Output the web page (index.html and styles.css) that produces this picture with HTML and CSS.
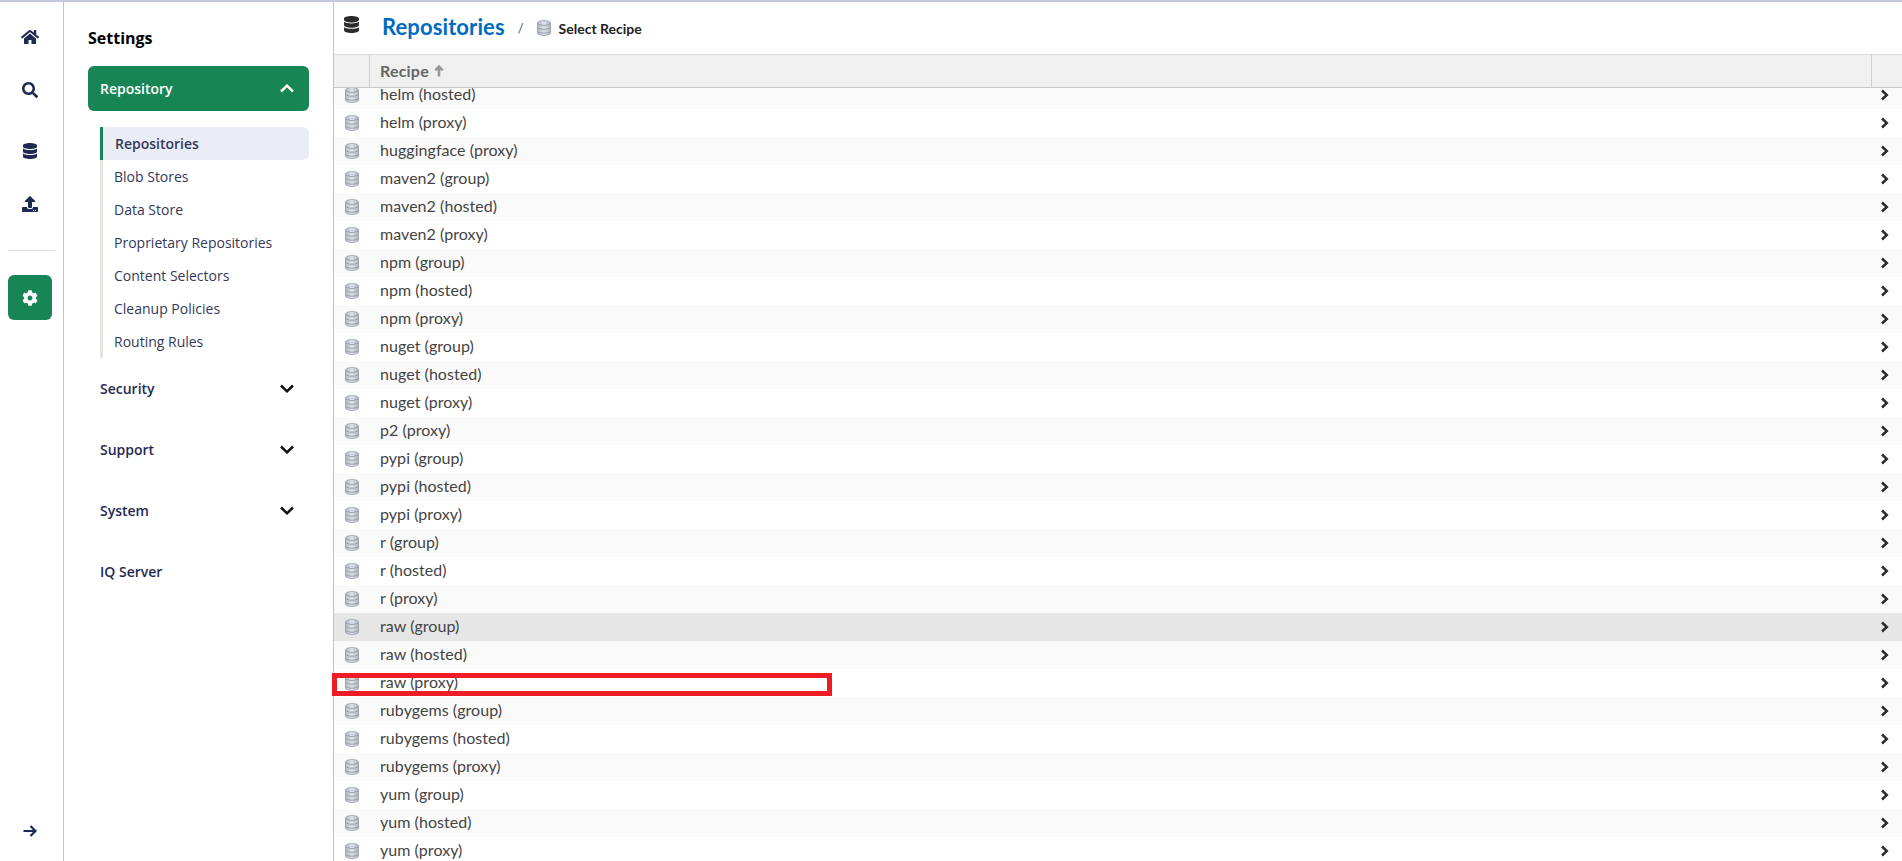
FILE: index.html
```html
<!DOCTYPE html>
<html lang="en">
<head>
<meta charset="utf-8">
<title>Repositories</title>
<link rel="stylesheet" href="styles.css">
</head>
<body>
<svg class="defs" aria-hidden="true">
  <symbol id="i-db" viewBox="0 0 448 512"><path d="M448 73.143v45.714C448 159.143 347.667 192 224 192S0 159.143 0 118.857V73.143C0 32.857 100.333 0 224 0s224 32.857 224 73.143zM448 176v102.857C448 319.143 347.667 352 224 352S0 319.143 0 278.857V176c48.125 33.143 136.208 48.572 224 48.572S399.874 209.143 448 176zm0 160v102.857C448 479.143 347.667 512 224 512S0 479.143 0 438.857V336c48.125 33.143 136.208 48.572 224 48.572S399.874 369.143 448 336z"/></symbol>
  <linearGradient id="g-db" x1="0" y1="0" x2="1" y2="0"><stop offset="0" stop-color="#b4bbc4"/><stop offset="0.5" stop-color="#dfe3e7"/><stop offset="1" stop-color="#aeb6bf"/></linearGradient>
  <symbol id="i-repo" viewBox="0 0 14 16">
    <path d="M.5 3C.5 1.600 3.400.6 7 .6s6.500 1 6.500 2.400v10c0 1.400-2.900 2.400-6.500 2.400S.5 14.400.5 13z" fill="url(#g-db)" stroke="#9aa3ad" stroke-width=".9"/>
    <path d="M.7 3.400C1.600 4.600 4 5.400 7 5.400s5.400-.8 6.300-2M.7 7.300C1.600 8.500 4 9.300 7 9.300s5.400-.8 6.300-2M.7 11.200c.9 1.200 3.300 2 6.300 2s5.400-.8 6.300-2" fill="none" stroke="#8f98a3" stroke-width=".9"/>
  </symbol>
  <symbol id="i-next" viewBox="0 0 10 12"><path d="M2 1.500 6.800 6 2 10.500" fill="none" stroke="currentColor" stroke-width="2.500"/></symbol>
  <symbol id="i-chev" viewBox="0 0 14 9"><path d="M1 7.500 7 1.700l6 5.800" fill="none" stroke="currentColor" stroke-width="2.500"/></symbol>
</svg>

<div class="app">
  <nav class="rail">
    <a class="rail-item"><svg class="ic-home" viewBox="0 0 576 512"><path d="M280.37 148.26L96 300.11V464a16 16 0 0 0 16 16l112.06-.29a16 16 0 0 0 15.92-16V368a16 16 0 0 1 16-16h64a16 16 0 0 1 16 16v95.64a16 16 0 0 0 16 16.05L464 480a16 16 0 0 0 16-16V300L295.67 148.26a12.19 12.19 0 0 0-15.3 0zM571.6 251.47L488 182.56V44.05a12 12 0 0 0-12-12h-56a12 12 0 0 0-12 12v72.61L318.47 43a48 48 0 0 0-61 0L4.34 251.47a12 12 0 0 0-1.6 16.9l25.5 31A12 12 0 0 0 45.15 301l235.22-193.74a12.19 12.19 0 0 1 15.3 0L530.9 301a12 12 0 0 0 16.9-1.6l25.5-31a12 12 0 0 0-1.7-16.93z"/></svg></a>
    <a class="rail-item"><svg class="ic" viewBox="0 0 512 512"><path d="M505 442.7L405.3 343c-4.500-4.500-10.600-7-17-7H372c27.600-35.300 44-79.700 44-128C416 93.100 322.900 0 208 0S0 93.100 0 208s93.100 208 208 208c48.300 0 92.700-16.400 128-44v16.300c0 6.400 2.500 12.500 7 17l99.700 99.700c9.400 9.400 24.600 9.400 33.900 0l28.300-28.300c9.400-9.400 9.400-24.600.1-34zM208 336c-70.700 0-128-57.200-128-128 0-70.700 57.200-128 128-128 70.700 0 128 57.200 128 128 0 70.700-57.200 128-128 128z"/></svg></a>
    <a class="rail-item rail-gap"><svg class="ic"><use href="#i-db"/></svg></a>
    <a class="rail-item"><svg class="ic" viewBox="0 0 512 512"><path d="M296 384h-80c-13.300 0-24-10.700-24-24V192h-87.700c-17.800 0-26.700-21.500-14.100-34.100L242.300 5.700c7.500-7.500 19.800-7.500 27.300 0l152.200 152.200c12.600 12.600 3.700 34.100-14.100 34.100H320v168c0 13.300-10.700 24-24 24zm216-8v112c0 13.300-10.700 24-24 24H24c-13.300 0-24-10.700-24-24V376c0-13.300 10.700-24 24-24h136v8c0 30.900 25.100 56 56 56h80c30.900 0 56-25.100 56-56v-8h136c13.300 0 24 10.700 24 24zm-124 88c0-11-9-20-20-20s-20 9-20 20 9 20 20 20 20-9 20-20zm64 0c0-11-9-20-20-20s-20 9-20 20 9 20 20 20 20-9 20-20z"/></svg></a>
    <div class="rail-divider"></div>
    <a class="rail-item rail-active"><svg class="ic" viewBox="0 0 512 512"><path d="M487.400 315.700l-42.600-24.600c4.300-23.200 4.300-47 0-70.200l42.600-24.600c4.900-2.800 7.100-8.600 5.500-14-11.100-35.600-30-67.800-54.700-94.600-3.800-4.100-10-5.100-14.800-2.300L380.800 110c-17.900-15.400-38.500-27.300-60.800-35.100V25.800c0-5.600-3.900-10.500-9.400-11.700-36.700-8.200-74.300-7.800-109.200 0-5.500 1.200-9.400 6.100-9.400 11.700V75c-22.200 7.900-42.800 19.800-60.800 35.100L88.700 85.500c-4.900-2.800-11-1.900-14.800 2.300-24.700 26.700-43.600 58.900-54.700 94.600-1.700 5.400.6 11.200 5.500 14L67.300 221c-4.300 23.200-4.300 47 0 70.200l-42.600 24.600c-4.900 2.800-7.100 8.600-5.500 14 11.100 35.600 30 67.800 54.700 94.600 3.800 4.100 10 5.100 14.800 2.300l42.600-24.600c17.900 15.400 38.500 27.300 60.800 35.100v49.200c0 5.600 3.900 10.500 9.400 11.700 36.700 8.200 74.300 7.800 109.200 0 5.500-1.200 9.400-6.100 9.400-11.700v-49.200c22.200-7.900 42.800-19.800 60.800-35.100l42.600 24.600c4.900 2.800 11 1.900 14.800-2.300 24.700-26.700 43.600-58.900 54.700-94.600 1.500-5.500-.7-11.300-5.600-14.100zM256 336c-44.100 0-80-35.900-80-80s35.900-80 80-80 80 35.900 80 80-35.900 80-80 80z"/></svg></a>
    <a class="rail-item rail-bottom"><svg class="ic-arrow" viewBox="0 0 14 14"><path d="M.5 7H12M7.500 2l5 5-5 5" fill="none" stroke="currentColor" stroke-width="2.200"/></svg></a>
  </nav>

  <aside class="side">
    <h2 class="side-title">Settings</h2>
    <div class="group group-open">Repository<svg class="chev"><use href="#i-chev"/></svg></div>
    <ul class="sub">
      <li class="sub-active">Repositories</li>
      <li>Blob Stores</li>
      <li>Data Store</li>
      <li>Proprietary Repositories</li>
      <li>Content Selectors</li>
      <li>Cleanup Policies</li>
      <li>Routing Rules</li>
    </ul>
    <div class="group">Security<svg class="chev chev-down"><use href="#i-chev"/></svg></div>
    <div class="group">Support<svg class="chev chev-down"><use href="#i-chev"/></svg></div>
    <div class="group">System<svg class="chev chev-down"><use href="#i-chev"/></svg></div>
    <div class="group">IQ Server</div>
  </aside>

  <main class="main">
    <header class="crumbs">
      <svg class="crumb-db"><use href="#i-db"/></svg>
      <h1 class="crumb-title">Repositories</h1>
      <span class="crumb-sep">/</span>
      <svg class="repo crumb-repo"><use href="#i-repo"/></svg>
      <span class="crumb-sub">Select Recipe</span>
    </header>
    <div class="thead">
      <div class="th th-icon"></div>
      <div class="th th-name">Recipe <svg class="sort" viewBox="0 0 10 12"><path d="M5 11.500V2M1.300 5.400 5 1.600l3.700 3.800" fill="none" stroke="currentColor" stroke-width="2.600"/></svg></div>
      <div class="th th-end"></div>
    </div>
    <div class="tbody">
      <div class="rows">
        <div class="row"><svg class="repo"><use href="#i-repo"/></svg><span class="name">helm (hosted)</span><svg class="next"><use href="#i-next"/></svg></div>
        <div class="row"><svg class="repo"><use href="#i-repo"/></svg><span class="name">helm (proxy)</span><svg class="next"><use href="#i-next"/></svg></div>
        <div class="row"><svg class="repo"><use href="#i-repo"/></svg><span class="name">huggingface (proxy)</span><svg class="next"><use href="#i-next"/></svg></div>
        <div class="row"><svg class="repo"><use href="#i-repo"/></svg><span class="name">maven2 (group)</span><svg class="next"><use href="#i-next"/></svg></div>
        <div class="row"><svg class="repo"><use href="#i-repo"/></svg><span class="name">maven2 (hosted)</span><svg class="next"><use href="#i-next"/></svg></div>
        <div class="row"><svg class="repo"><use href="#i-repo"/></svg><span class="name">maven2 (proxy)</span><svg class="next"><use href="#i-next"/></svg></div>
        <div class="row"><svg class="repo"><use href="#i-repo"/></svg><span class="name">npm (group)</span><svg class="next"><use href="#i-next"/></svg></div>
        <div class="row"><svg class="repo"><use href="#i-repo"/></svg><span class="name">npm (hosted)</span><svg class="next"><use href="#i-next"/></svg></div>
        <div class="row"><svg class="repo"><use href="#i-repo"/></svg><span class="name">npm (proxy)</span><svg class="next"><use href="#i-next"/></svg></div>
        <div class="row"><svg class="repo"><use href="#i-repo"/></svg><span class="name">nuget (group)</span><svg class="next"><use href="#i-next"/></svg></div>
        <div class="row"><svg class="repo"><use href="#i-repo"/></svg><span class="name">nuget (hosted)</span><svg class="next"><use href="#i-next"/></svg></div>
        <div class="row"><svg class="repo"><use href="#i-repo"/></svg><span class="name">nuget (proxy)</span><svg class="next"><use href="#i-next"/></svg></div>
        <div class="row"><svg class="repo"><use href="#i-repo"/></svg><span class="name">p2 (proxy)</span><svg class="next"><use href="#i-next"/></svg></div>
        <div class="row"><svg class="repo"><use href="#i-repo"/></svg><span class="name">pypi (group)</span><svg class="next"><use href="#i-next"/></svg></div>
        <div class="row"><svg class="repo"><use href="#i-repo"/></svg><span class="name">pypi (hosted)</span><svg class="next"><use href="#i-next"/></svg></div>
        <div class="row"><svg class="repo"><use href="#i-repo"/></svg><span class="name">pypi (proxy)</span><svg class="next"><use href="#i-next"/></svg></div>
        <div class="row"><svg class="repo"><use href="#i-repo"/></svg><span class="name">r (group)</span><svg class="next"><use href="#i-next"/></svg></div>
        <div class="row"><svg class="repo"><use href="#i-repo"/></svg><span class="name">r (hosted)</span><svg class="next"><use href="#i-next"/></svg></div>
        <div class="row"><svg class="repo"><use href="#i-repo"/></svg><span class="name">r (proxy)</span><svg class="next"><use href="#i-next"/></svg></div>
        <div class="row row-hover"><svg class="repo"><use href="#i-repo"/></svg><span class="name">raw (group)</span><svg class="next"><use href="#i-next"/></svg></div>
        <div class="row"><svg class="repo"><use href="#i-repo"/></svg><span class="name">raw (hosted)</span><svg class="next"><use href="#i-next"/></svg></div>
        <div class="row"><svg class="repo"><use href="#i-repo"/></svg><span class="name">raw (proxy)</span><svg class="next"><use href="#i-next"/></svg></div>
        <div class="row"><svg class="repo"><use href="#i-repo"/></svg><span class="name">rubygems (group)</span><svg class="next"><use href="#i-next"/></svg></div>
        <div class="row"><svg class="repo"><use href="#i-repo"/></svg><span class="name">rubygems (hosted)</span><svg class="next"><use href="#i-next"/></svg></div>
        <div class="row"><svg class="repo"><use href="#i-repo"/></svg><span class="name">rubygems (proxy)</span><svg class="next"><use href="#i-next"/></svg></div>
        <div class="row"><svg class="repo"><use href="#i-repo"/></svg><span class="name">yum (group)</span><svg class="next"><use href="#i-next"/></svg></div>
        <div class="row"><svg class="repo"><use href="#i-repo"/></svg><span class="name">yum (hosted)</span><svg class="next"><use href="#i-next"/></svg></div>
        <div class="row"><svg class="repo"><use href="#i-repo"/></svg><span class="name">yum (proxy)</span><svg class="next"><use href="#i-next"/></svg></div>
      </div>
    </div>
    <div class="annotation"></div>
  </main>
</div>
</body>
</html>
```
FILE: styles.css
```css
* { box-sizing: border-box; }
html, body { margin: 0; height: 100%; overflow: hidden; background: #fff; }
.defs { position: absolute; width: 0; height: 0; }
.app { display: flex; height: 861px; border-top: 2px solid #c3c8e0; }

.rail { width: 64px; flex: none; display: flex; flex-direction: column; padding: 12px 8px 8px; border-right: 1px solid #bcc3de; color: #1f2a52; fill: #1f2a52; }
.rail-item { width: 44px; height: 45px; flex: none; margin-bottom: 8px; display: flex; align-items: center; justify-content: center; border-radius: 6px; }
.rail-gap { margin-top: 8px; }
.ic { width: 16px; height: 16px; }
.ic-home { width: 18px; height: 16px; }
.ic-arrow { width: 14px; height: 14px; }
.rail-divider { height: 1px; background: #d9dcec; margin: 16px 0 24px; flex: none; }
.rail-active { background: #178556; fill: #fff; }
.rail-bottom { margin-top: auto; margin-bottom: 0; }

.side { width: 270px; flex: none; padding: 24px 24px 0; border-right: 1px solid #bcc3de; font-family: "Open Sans", sans-serif; }
.side-title { margin: 0 0 15px; font-size: 16px; line-height: 25px; font-weight: 700; color: #000; }
.group { height: 45px; margin-bottom: 16px; display: flex; align-items: center; justify-content: space-between; padding: 0 15px 0 12px; border-radius: 6px; font-size: 14px; font-weight: 600; color: #1f2a52; }
.group-open { background: #178556; color: #fff; }
.chev { width: 14px; height: 9px; color: #fff; }
.chev-down { color: #111; transform: rotate(180deg); }
.sub { list-style: none; margin: 0 0 8px 12px; padding: 0; border-left: 3px solid #e5e5e0; }
.sub li { height: 33px; line-height: 33px; padding-left: 11px; font-size: 14px; color: #33395a; }
.sub .sub-active { margin-left: -3px; padding-left: 12px; border-left: 3px solid #178556; border-radius: 0 6px 6px 0; background: #ebedf6; font-weight: 600; }

.main { flex: 1; min-width: 0; position: relative; display: flex; flex-direction: column; font-family: Lato, sans-serif; }
.crumbs { height: 52px; flex: none; display: flex; align-items: center; padding-left: 10px; }
.crumb-db { width: 15px; height: 17px; margin: -8px 0 0 0; fill: #2b2b2b; }
.crumb-title { margin: -4px 13px 0 23px; font-size: 22px; font-weight: 700; letter-spacing: .1px; color: #006bbf; }
.crumb-sep { font-size: 13px; color: #555; margin-right: 13px; }
.crumb-sub { font-size: 14px; font-weight: 700; color: #222; margin-left: 8px; }
.thead { height: 34px; flex: none; display: flex; background: #f0f0f0; border-top: 1px solid #dcdcdc; border-bottom: 1px solid #c8c8c8; font-weight: 700; font-size: 16px; letter-spacing: .2px; color: #666; }
.th { height: 100%; display: flex; align-items: center; padding-bottom: 1px; }
.th-icon { width: 36px; border-right: 1px solid #d0d0d0; }
.th-name { flex: 1; padding-left: 10px; gap: 5px; border-right: 1px solid #d0d0d0; }
.th-end { width: 30px; }
.sort { width: 10px; height: 12px; color: #999; }
.tbody { flex: 1; min-height: 0; overflow: hidden; }
.rows { margin-top: -7px; }
.row { height: 28px; display: flex; align-items: center; padding-left: 11px; padding-right: 12px; font-size: 16px; letter-spacing: .05px; color: #444; }
.row:nth-child(odd) { background: #fafafa; }
.row.row-hover { background: #e6e6e6; }
.repo { width: 14px; height: 16px; flex: none; }
.name { flex: 1; padding-left: 21px; margin-top: -2px; line-height: 12px; }
.next { width: 10px; height: 12px; color: #2b2b2b; flex: none; }
.annotation { position: absolute; left: -2px; top: 671px; width: 500px; height: 23px; border: 5px solid #ee1c25; pointer-events: none; }
```
